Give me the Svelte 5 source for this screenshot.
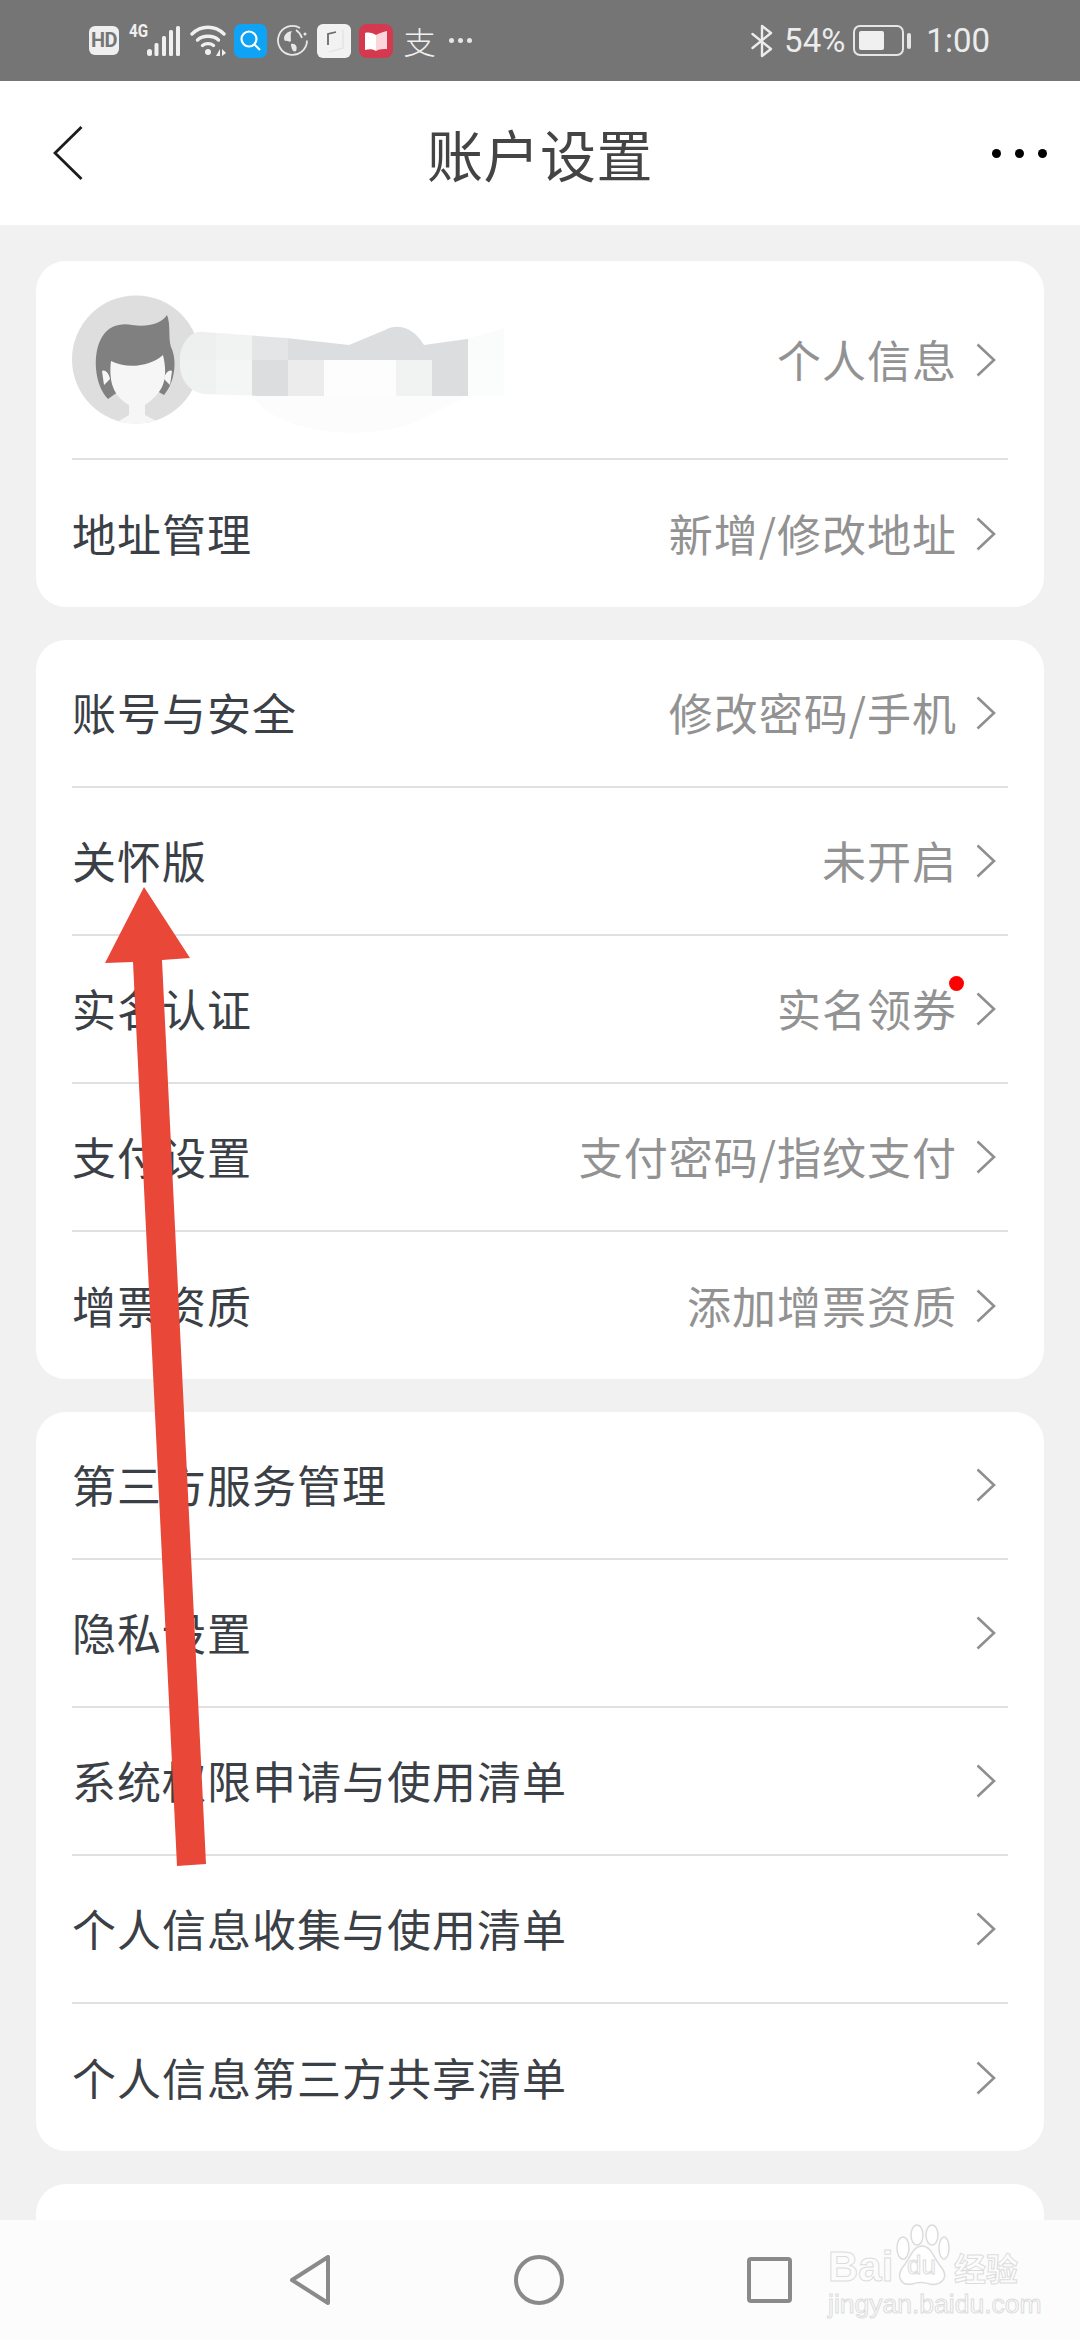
<script>
  const groups = [
    [
      { label: '账号与安全', value: '修改密码/手机' },
      { label: '关怀版', value: '未开启' },
      { label: '实名认证', value: '实名领券', dot: true },
      { label: '支付设置', value: '支付密码/指纹支付' },
      { label: '增票资质', value: '添加增票资质' }
    ],
    [
      { label: '第三方服务管理' },
      { label: '隐私设置' },
      { label: '系统权限申请与使用清单' },
      { label: '个人信息收集与使用清单' },
      { label: '个人信息第三方共享清单' }
    ]
  ];

  const mosaic = [
    { y: 325, h: 35, cells: [[180, 36, '#eef0ef'], [216, 36, '#f1f2f2'], [252, 36, '#e4e5e6'], [288, 180, '#dcddde'], [468, 36, '#fafbfb']] },
    { y: 360, h: 36, cells: [[180, 36, '#f0f1f1'], [216, 36, '#f4f5f5'], [252, 36, '#dcddde'], [288, 36, '#ebeceb'], [324, 72, '#fcfdfc'], [396, 36, '#f1f2f2'], [432, 36, '#dcddde'], [468, 36, '#fbfcfc']] }
  ];
</script>

{#snippet chevron()}
  <svg class="chevron" width="20" height="34" viewBox="0 0 20 34" fill="none" stroke="#8f8f8f" stroke-width="2.6">
    <path d="M1.5 1.5 L18 17 L1.5 32.5" />
  </svg>
{/snippet}

<div class="page">
  <div class="statusbar">
    <div class="status-left">
      <span class="hd">HD</span>
      <span class="signal">
        <span class="fourg">4G</span>
        <svg width="33" height="30" viewBox="0 0 33 30" fill="#f0f0f0">
          <rect x="0" y="23" width="5" height="7" rx="2.5" />
          <rect x="7.500" y="17" width="4" height="13" rx="1.500" />
          <rect x="15" y="10" width="4" height="20" rx="1.500" />
          <rect x="22" y="4" width="4" height="26" rx="1.500" />
          <rect x="29" y="0" width="4" height="30" rx="1.500" />
        </svg>
      </span>
      <svg class="wifi" width="37" height="31" viewBox="0 0 37 31" fill="none" stroke="#f0f0f0" stroke-width="3.4" stroke-linecap="round">
        <path d="M2 9 C11 0 25 0 34 9" />
        <path d="M7.500 15 C13 10 23 10 28.500 15" />
        <path d="M12.500 20.500 C15.500 18 20.500 18 23.500 20.500" />
        <circle cx="18" cy="27" r="3" fill="#f0f0f0" stroke="none" />
        <path d="M26 31 L30 24 V31 Z M32 24 L36 28 L32 31 Z" fill="#f0f0f0" stroke="none" />
      </svg>
      <svg class="app search" width="33" height="34" viewBox="0 0 33 34">
        <rect width="33" height="34" rx="7" fill="#0fa3f5" />
        <circle cx="15" cy="15" r="7.500" fill="none" stroke="#fff" stroke-width="2.200" />
        <path d="M20.500 20.500 L26 26" stroke="#fff" stroke-width="2.200" />
      </svg>
      <svg class="globe" width="33" height="33" viewBox="0 0 33 33" fill="none" stroke="#e8e8e8" stroke-width="1.800">
        <path d="M24 4 A14.500 14.500 0 1 0 31 16.500" />
        <path d="M12 8 C8 11 7 14 9 17 C12 16 13 19 15 17 C15 13 14 10 16 7 Z" fill="#e8e8e8" stroke="none" />
        <path d="M15 20 C19 19 22 22 20 27 C17 29 15 24 15 20 Z" fill="#e8e8e8" stroke="none" />
        <path d="M20 6 C23 8 25 11 26 14" />
        <circle cx="29" cy="10" r="1.500" fill="#e8e8e8" stroke="none" />
      </svg>
      <svg class="app" width="34" height="34" viewBox="0 0 34 34">
        <rect width="34" height="34" rx="6" fill="#f2f2f2" />
        <path d="M19 8 L11 10 V21" fill="none" stroke="#6b6b6b" stroke-width="1.800" />
        <path d="M26 6 V24 L12 28" fill="none" stroke="#e2e2e2" stroke-width="1.200" />
      </svg>
      <svg class="app" width="34" height="34" viewBox="0 0 34 34">
        <rect width="34" height="34" rx="8" fill="#d5394f" />
        <path d="M6 9 C10 8 14 9 17 11 V27 C14 25 10 25 6 26 Z" fill="#fff" />
        <path d="M17 11 C20 9 24 8 28 7 V25 C24 25 20 25 17 27 Z" fill="#fbd5da" />
      </svg>
      <span class="zhi">支</span>
      <span class="more-status"><i></i><i></i><i></i></span>
    </div>
    <div class="status-right">
      <svg width="23" height="34" viewBox="0 0 23 34" fill="none" stroke="#ececec" stroke-width="2.400" stroke-linejoin="round" stroke-linecap="round">
        <path d="M1.500 10 L20 25 L11 32 V2 L20 9 L1.500 24" />
      </svg>
      <span class="pct">54%</span>
      <span class="battery"><span class="level"></span></span>
      <span class="nub"></span>
      <span class="time">1:00</span>
    </div>
  </div>

  <header class="topbar">
    <svg class="back" width="30" height="54" viewBox="0 0 30 54" fill="none" stroke="#1c1c1c" stroke-width="2.800">
      <path d="M28.500 1 L2 27 L28.500 53" />
    </svg>
    <h1>账户设置</h1>
    <div class="dots"><i></i><i></i><i></i></div>
  </header>

  <main class="content">
    <section class="card first">
      <div class="row profile">
        <svg class="avatar" width="128" height="129" viewBox="0 0 128 129">
          <defs>
            <clipPath id="avatar-clip"><circle cx="64" cy="64.500" r="64" /></clipPath>
          </defs>
          <g clip-path="url(#avatar-clip)">
            <rect width="128" height="129" fill="#dedede" />
            <path d="M36 104 C22 90 20 58 30 42 C37 30 50 28 60 30 C74 32 88 30 95 20 C99 30 96 42 99 52 C105 64 104 86 92 100 L64 84 Z" fill="#808080" />
            <path d="M30 76 C33 74 37 78 38 84 L32 90 Z M100 76 C97 74 93 78 92 84 L98 90 Z" fill="#f6f6f6" />
            <path d="M39 66 C54 74 78 72 91 60 C94 72 94 84 90 92 C85 102 76 108 73 110 V120 L90 129 H42 L57 120 V110 C50 106 44 100 41 92 C38 84 38 74 39 66 Z" fill="#f6f6f6" />
          </g>
        </svg>
        <svg class="mosaic" width="324" height="130" viewBox="180 320 324 130">
          <defs>
            <clipPath id="mosaic-clip">
              <path d="M180 355 C183 338 194 330 204 332 L286 338 L349 345 L385 330 C400 322 415 330 424 345 L467 339 L504 328 V396 H260 L204 394 C190 392 180 380 180 365 Z" />
            </clipPath>
          </defs>
          <path d="M252 396 C280 436 370 442 420 420 L468 396 Z" fill="#fcfcfc" />
          <g clip-path="url(#mosaic-clip)">
            {#each mosaic as band}
              {#each band.cells as [x, w, fill]}
                <rect {x} y={band.y} width={w} height={band.h} {fill} />
              {/each}
            {/each}
          </g>
        </svg>
        <span class="value">个人信息</span>
        {@render chevron()}
      </div>
      <div class="row">
        <span class="label">地址管理</span>
        <span class="value">新增/修改地址</span>
        {@render chevron()}
      </div>
    </section>

    {#each groups as rows}
      <section class="card">
        {#each rows as row}
          <div class="row">
            <span class="label">{row.label}</span>
            {#if row.value}
              <span class="value" class:has-dot={row.dot}>{row.value}</span>
            {/if}
            {@render chevron()}
          </div>
        {/each}
      </section>
    {/each}

    <section class="card tail"></section>
  </main>

  <nav class="navbar">
    <svg width="42" height="50" viewBox="0 0 42 50" fill="none" stroke="#8a8a8a" stroke-width="4" stroke-linejoin="round">
      <path d="M39 2 V48 L3 25 Z" />
    </svg>
    <svg width="50" height="50" viewBox="0 0 50 50" fill="none" stroke="#8a8a8a" stroke-width="4">
      <circle cx="25" cy="25" r="23" />
    </svg>
    <svg width="45" height="46" viewBox="0 0 45 46" fill="none" stroke="#8a8a8a" stroke-width="4">
      <rect x="2" y="2" width="41" height="42" rx="2" />
    </svg>
    <div class="watermark">
      <div class="wm-top">
        <span class="wm-bai">Bai</span>
        <span class="paw">
          <svg width="56" height="62" viewBox="0 0 56 62" fill="#fff" stroke="#dcdcdc" stroke-width="1.500">
            <ellipse cx="23" cy="11" rx="6" ry="10" />
            <ellipse cx="38" cy="11" rx="6" ry="10" />
            <ellipse cx="9" cy="24" rx="6" ry="11" />
            <ellipse cx="50" cy="24" rx="5" ry="11" />
            <path d="M28 22 C38 22 40 36 48 44 C56 56 44 62 36 60 C30 58 24 58 18 60 C8 62 2 54 8 44 C16 36 18 22 28 22 Z" />
          </svg>
          <span class="wm-du">du</span>
        </span>
        <span class="wm-jy">经验</span>
      </div>
      <div class="wm-url">jingyan.baidu.com</div>
    </div>
  </nav>

  <svg class="arrow" width="1080" height="2340" viewBox="0 0 1080 2340">
    <path d="M144 887 L190 958 L162 960 L206 1864 L177 1866 L133 962 L105 963 Z" fill="#e94738" />
  </svg>
</div>

<style>
  :global(body) {
    margin: 0;
    background: #f1f1f1;
  }

  .page {
    position: relative;
    width: 1080px;
    height: 2340px;
    display: flex;
    flex-direction: column;
    overflow: hidden;
    font-family: "Noto Sans CJK SC", "Noto Sans", sans-serif;
  }

  .statusbar {
    height: 81px;
    flex: none;
    background: #757575;
    display: flex;
    justify-content: space-between;
    align-items: center;
    padding: 0 90px 0 89px;
    color: #f0f0f0;
  }

  .status-left,
  .status-right {
    display: flex;
    align-items: center;
  }

  .status-left svg {
    flex: none;
  }

  .hd {
    width: 30px;
    height: 29px;
    border-radius: 6px;
    background: #efefef;
    color: #757575;
    font: 700 20px/29px "Roboto", sans-serif;
    text-align: center;
    letter-spacing: -0.5px;
  }

  .signal {
    position: relative;
    display: flex;
    margin-left: 28px;
  }

  .fourg {
    position: absolute;
    left: -18px;
    top: -5px;
    font: 700 19px/20px "Roboto", sans-serif;
    transform: scaleX(0.8);
    transform-origin: left top;
  }

  .wifi {
    margin-left: 10px;
  }

  .search {
    margin-left: 7px;
  }

  .globe {
    margin: 0 8px 0 1px;
  }

  .app {
    margin-right: 8px;
  }

  .zhi {
    margin-left: 3px;
    font-size: 31px;
    line-height: 34px;
    font-weight: 300;
    width: 32px;
    transform: scaleX(1.05);
  }

  .more-status {
    display: flex;
    gap: 4px;
    margin-left: 13px;
  }

  .more-status i {
    width: 5px;
    height: 5px;
    border-radius: 50%;
    background: #e6e6e6;
  }

  .pct,
  .time {
    font: 400 33px/40px "Roboto", sans-serif;
    color: #ececec;
  }

  .pct {
    margin-left: 10px;
  }

  .battery {
    box-sizing: border-box;
    width: 51px;
    height: 31px;
    margin-left: 8px;
    padding: 4px;
    border: 2.500px solid #e6e6e6;
    border-radius: 7px;
  }

  .level {
    display: block;
    width: 25px;
    height: 100%;
    background: #f0f0f0;
    border-radius: 2px;
  }

  .nub {
    width: 4px;
    height: 16px;
    margin-left: 3px;
    background: #e6e6e6;
    border-radius: 2px;
  }

  .time {
    margin-left: 15px;
  }

  .topbar {
    height: 144px;
    flex: none;
    position: relative;
    background: #fff;
    display: flex;
    align-items: center;
    justify-content: center;
  }

  .back {
    position: absolute;
    left: 53px;
    top: 45px;
  }

  h1 {
    margin: 0;
    font-size: 56px;
    font-weight: 400;
    line-height: 72px;
    letter-spacing: 0.5px;
    color: #444;
  }

  .dots {
    position: absolute;
    right: 33px;
    top: 68px;
    display: flex;
    gap: 14px;
  }

  .dots i {
    width: 9px;
    height: 9px;
    border-radius: 50%;
    background: #000;
  }

  .content {
    flex: 1;
    min-height: 0;
    display: flex;
    flex-direction: column;
    gap: 33px;
    padding: 36px 36px 0;
  }

  .card {
    flex: none;
    background: #fff;
    border-radius: 30px;
    padding: 0 36px;
  }

  .card.tail {
    height: 120px;
  }

  .row {
    height: 148px;
    box-sizing: border-box;
    display: flex;
    align-items: center;
    border-bottom: 2px solid #e0e0e0;
  }

  .row:last-child {
    border-bottom: none;
    height: 147px;
  }

  .row.profile {
    position: relative;
    height: 199px;
  }

  .avatar {
    flex: none;
  }

  .mosaic {
    position: absolute;
    left: 108px;
    top: 59px;
  }

  .label {
    font-size: 44px;
    line-height: 60px;
    color: #3a4046;
    letter-spacing: 1px;
    transform: translateY(-1px);
  }

  .value {
    position: relative;
    margin-left: auto;
    font-size: 44px;
    line-height: 60px;
    color: #929292;
    letter-spacing: 1px;
    transform: translateY(-1px);
  }

  .value.has-dot::after {
    content: '';
    position: absolute;
    right: -7px;
    top: -2px;
    width: 15px;
    height: 15px;
    border-radius: 50%;
    background: #f00;
  }

  .chevron {
    flex: none;
    margin: 0 12px 0 19px;
  }

  .row:not(:has(.value)) .chevron {
    margin-left: auto;
  }

  .navbar {
    position: absolute;
    left: 0;
    right: 0;
    bottom: 0;
    height: 120px;
    background: #fcfcfc;
    display: flex;
    align-items: center;
    justify-content: center;
    gap: 183px;
  }

  .watermark {
    position: absolute;
    left: 828px;
    top: 4px;
    width: 194px;
    color: transparent;
    font-family: "Liberation Sans", sans-serif;
    -webkit-text-stroke: 1px #dcdcdc;
  }

  .wm-top {
    display: flex;
    align-items: flex-end;
    height: 62px;
  }

  .wm-bai {
    width: 66px;
    font-size: 42px;
    font-weight: 700;
    line-height: 38px;
  }

  .paw {
    position: relative;
    width: 58px;
    height: 62px;
    margin-right: 2px;
  }

  .paw svg {
    display: block;
  }

  .wm-du {
    position: absolute;
    left: 13px;
    bottom: 6px;
    font-size: 26px;
    line-height: 30px;
  }

  .wm-jy {
    font-family: "Noto Sans CJK SC", sans-serif;
    font-size: 32px;
    font-weight: 700;
    line-height: 38px;
  }

  .wm-url {
    margin-top: 3px;
    font-size: 26.500px;
    line-height: 30px;
    white-space: nowrap;
  }

  .arrow {
    position: absolute;
    left: 0;
    top: 0;
    pointer-events: none;
  }
</style>
